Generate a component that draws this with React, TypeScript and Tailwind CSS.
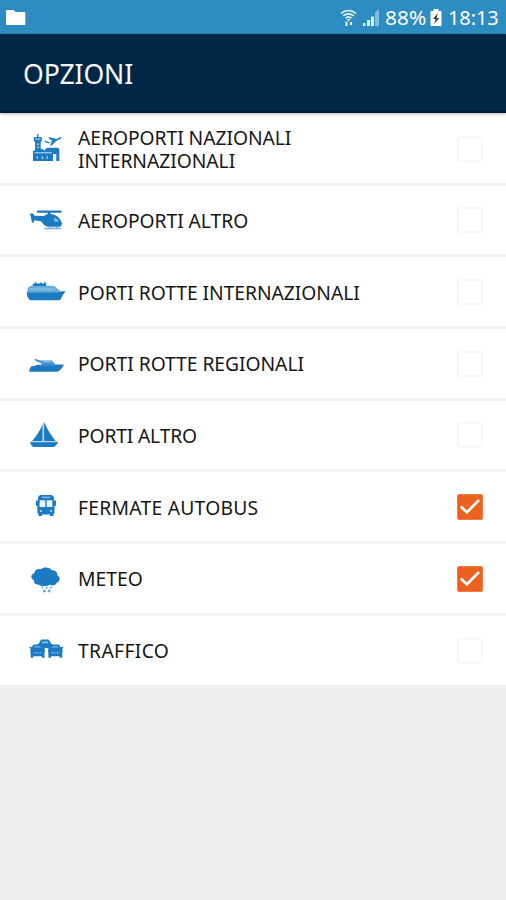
import type { ReactNode } from "react";

const BLUE = "#1b7ac2";

function Icon({ children }: { children: ReactNode }) {
  return (
    <svg className="ml-6 h-10 w-11 shrink-0" viewBox="0 0 44 40" fill={BLUE} aria-hidden="true">
      {children}
    </svg>
  );
}

const airport = (
  <Icon>
    <path d="M13.2 5h1.4v3h2.6l1 1.5-.8 3.2h-.7v7.3h2.6v1.2h2v-1.2l2-1.2h9.7c1.6 0 2.3.9 2.3 2.2V32h-3v-7H29v7H9V21.5h2v-8.8h-.6l-.9-3.2 1.2-1.5h2.5z" />
    <path d="M20 12.3l1.6-.7 3.6 1.9 3.4-1.5-4.6-3 1.7-.8 6.8 1.7 3-1.4c1.6-.6 2.6-.1 1.6 1l-5 2.5-4.2 4.3-2 .7 1.9-4-3.4 1.5z" />
    <path d="M11.3 10h5.2M12.6 15.2h2.6m-2.6 3h2.6M10.5 23.8H28M13.3 27v3m5-3v3m5-3v3" stroke="#c6e1f4" strokeWidth="1" fill="none" />
  </Icon>
);

const helicopter = (
  <Icon>
    <path d="M13 10.6h24.4v2.2H26.5v1.2c5.1.2 8.9 3.3 11.2 8.4.8 2.3-.7 4.4-3 4.4H25c-3.7 0-6.2-2.8-7.8-5.6L10 20.2v2.4H8L6 13.6h2.8l1.9 2.2 9.3.3 4-2.5v-.8H13z" />
    <path d="M29.8 17.4c2.2.7 3.8 2 5 4h-4.3z" fill="#8fc3e8" />
    <path d="M20.5 28.5H36.7m-10.7-2v2m7-2v2" stroke="#70b0dd" strokeWidth="1.4" fill="none" />
  </Icon>
);

const cruise = (
  <Icon>
    <path d="M2.7 19.8l38.9-.6c-2.7 3.2-3.4 5.2-4.8 7.8-.4.7-1 1.2-2 1.2H7c-2.5 0-4.3-4-4.3-8.4z" />
    <path d="M4 15.4l3-1.7h23l3.2 2.8 3.5 2.7-3 1.2H3z" fill="#69acdc" />
    <path d="M8.5 14l.7-2.6h2V9.5l2 1.9h3V10l2 1.4h2V9.3l2 2V14z" />
    <path d="M6 17h25" stroke="#a2cee9" strokeWidth="1" strokeDasharray="1.8 .7" />
  </Icon>
);

const yacht = (
  <Icon>
    <path d="M5 27.8l1.6-5.1 7.4-1.9h5.6l20.3-.3c-1.6 3.4-3.6 5.9-6.4 7.3z" />
    <path d="M10.3 14.4l6.2 2h11.2l4.6 5.1-16.5.5 2-2.7-5.8-2z" fill="#3d91cf" />
    <path d="M18.5 17.9h8l2 1.8" stroke="#a5cde8" fill="none" />
  </Icon>
);

const sailboat = (
  <Icon>
    <path d="M18.6 9.2V26H8.1c4.2-4.9 7.9-10.2 10.5-16.8zM20.1 6.7c2.7 7 7 13.6 11.8 19.6L20.1 26zM6 27.1h28.2c-1.2 2.7-2.8 4.2-4.7 5H9.2C7.5 30.9 6.5 29.3 6 27.1z" />
    <path d="M19.4 8v18.5M7.6 26.8h25.3" stroke="#9bcbe9" strokeWidth=".9" />
  </Icon>
);

const bus = (
  <Icon>
    <path d="M12.8 13.5h1.2v-2.2c0-2 1.2-3.3 3.2-3.3h9.6c2 0 3.2 1.3 3.2 3.3v2.2h1.2c.7 0 .9.5.9 1.2v4h-1.6V26l-1 1v2H26v-1.5h-8V29h-3.5v-2l-1.1-1v-7.3H12v-4c0-.7.1-1.2.8-1.2z" />
    <path d="M15.7 13.2h5.6v6.9h-5.8zm7 0h5.6l.2 6.9h-5.8z" fill="#e5f3fc" />
    <path d="M18 10.4h8" stroke="#80bce3" strokeWidth="1.5" />
    <circle cx="16.9" cy="24" r="1.1" fill="#b8dcf4" />
    <circle cx="27.1" cy="24" r="1.1" fill="#b8dcf4" />
  </Icon>
);

const cloud = (
  <Icon>
    <path d="M14.2 25.5c-3.2.2-4.7-1.9-4.1-4.3-4.1-1.7-3.4-6.3.2-7 .3-3.3 3.6-4.8 6.5-3.9 2.7-2.9 8.9-2.4 10.9.9 3.6-.4 5.9 2.1 5.6 5 3.4 2 3.1 6.1-.4 7.3-1 2.6-4.2 3.7-7 2.3-3.4 1.8-8.7 1.7-11.7-.3z" />
    <g fill="#64add9">
      <circle cx="18.4" cy="28.5" r="1" /><circle cx="22.6" cy="28.8" r="1" /><circle cx="27" cy="28.5" r="1" />
      <circle cx="20.4" cy="32" r="1.4" /><circle cx="25.2" cy="32" r="1.4" />
    </g>
  </Icon>
);

const traffic = (
  <Icon>
    <path d="M14.5 13l1.7-3.1c.5-.9 1.1-1.3 2.1-1.3h5.2c1 0 1.6.4 2.1 1.3l1.9 3.1h1v2.2L24 17h-5l-5-2v-2z" />
    <path d="M17.5 12.2l1-1.8h5l1 1.8z" fill="#87bfe4" />
    {[5.2, 22.9].map((x) => (
      <g key={x} transform={`translate(${x} 13.5)`}>
        <path d="M0 2.2l2.7.6 1-2C4.2.1 5 0 6 0h4.5c1 0 1.7.1 2.2.8l1 2 2.8-.6-.3 1.6-1.1.4c.8 1 .9 2.6.2 4.2v4.9h-2.6v-1.6H4v1.6H1.5V8.4c-.6-1.6-.5-3.2.3-4.2L.3 3.8z" />
        <path d="M4.7 3.2l1-1.6h5.1l1 1.6z" fill="#5fa6d8" />
        <path d="M4 7.6l2 .8h4.6l2-.8" stroke="#75b5df" fill="none" />
      </g>
    ))}
  </Icon>
);

const options = [
  { label: "AEROPORTI NAZIONALI INTERNAZIONALI", icon: airport, checked: false, tracking: "tracking-[-0.05px]" },
  { label: "AEROPORTI ALTRO", icon: helicopter, checked: false, tracking: "tracking-[-0.05px]" },
  { label: "PORTI ROTTE INTERNAZIONALI", icon: cruise, checked: false, tracking: "tracking-[-0.04px]" },
  { label: "PORTI ROTTE REGIONALI", icon: yacht, checked: false, tracking: "tracking-[-0.05px]" },
  { label: "PORTI ALTRO", icon: sailboat, checked: false, tracking: "tracking-[-0.17px]" },
  { label: "FERMATE AUTOBUS", icon: bus, checked: true, tracking: "tracking-[0.25px]" },
  { label: "METEO", icon: cloud, checked: true, tracking: "tracking-normal" },
  { label: "TRAFFICO", icon: traffic, checked: false, tracking: "tracking-[0.35px]" },
];

function Checkbox({ checked }: { checked: boolean }) {
  return checked ? (
    <span role="checkbox" aria-checked="true" className="mr-[23px] flex size-[26px] shrink-0 items-center justify-center rounded-[2px] border border-[#f47a45] bg-[#ed611f]">
      <svg className="size-6" viewBox="0 0 24 24" fill="none" stroke="white" strokeWidth="2.7">
        <path d="M2.8 11.5l6.1 5.8L21 5" />
      </svg>
    </span>
  ) : (
    <span role="checkbox" aria-checked="false" className="mr-[23px] size-[26px] shrink-0 rounded-[3px] border-2 border-[#f7f7f7]" />
  );
}

export default function App() {
  return (
    <div className="h-[900px] w-[506px] overflow-hidden bg-[#eeeeee] font-['Noto_Sans','Open_Sans',sans-serif]">
      <div className="flex h-[34px] items-center bg-[#2d8cc0] pt-px text-white">
        <svg className="ml-[5px] h-[18px] w-[22px]" viewBox="0 0 22 18" fill="white">
          <path d="M1 2.5C1 1.5 1.4 1 2.3 1h6.2l2 2H19c.9 0 1.3.5 1.3 1.3V15c0 .7-.4 1-1.3 1H2.3C1.4 16 1 15.7 1 15z" />
        </svg>
        <svg className="ml-auto h-[18px] w-[17px]" viewBox="0 0 17 18" fill="none" stroke="#e5f5fd" strokeWidth="1.6">
          <path d="M1 4.5c4.5-4 10.5-4 15 0M3.2 7c3-2.8 7.6-2.8 10.6 0M5.5 9.2c1.8-1.6 4.2-1.6 6 0" />
          <path d="M6.5 10h4l-2 2.5z" fill="#e5f5fd" stroke="none" />
          <path d="M6.5 12.5V17m4.5-4v3" strokeWidth="2" />
        </svg>
        <svg className="ml-[5px] h-[18px] w-[18px]" viewBox="0 0 18 18">
          <path d="M1 14h2.5v3H1zM5 11h3v6H5zM9 7.5h3V17H9z" fill="#d9eef9" />
          <path d="M13 3.5L17 0v17h-4z" fill="#81bddd" />
        </svg>
        <span className="ml-[5px] w-[43px] text-[20px] leading-[34px]">
          <span className="inline-block origin-left scale-x-[1.04] tracking-[0.1px]">88%</span>
        </span>
        <svg className="ml-[2px] h-[19px] w-3" viewBox="0 0 12 19">
          <path d="M3.5 1h5v2h2c.7 0 1 .3 1 1v13c0 .7-.3 1-1 1h-9c-.7 0-1-.3-1-1V4c0-.7.3-1 1-1h2z" fill="white" />
          <path d="M8 5l-5 6h2.6L4 16l5.2-6H6.5z" fill="#273f4b" />
        </svg>
        <span className="ml-[6px] mr-[7px] w-[51px] text-[20px] leading-[34px] tracking-[-0.1px]">18:13</span>
      </div>
      <header className="relative z-10 flex h-[79px] items-center border-b-2 border-[#001b34] bg-[#002746] pl-[23px] pt-[5px] text-[26.6px] tracking-[-0.1px] text-[#f7f8fa] shadow-[0_1px_3px_rgba(0,0,0,0.3)]">
        <h1>OPZIONI</h1>
      </header>
      <main className="bg-white">
        {options.map(({ label, icon, checked, tracking }, index) => (
          <div
            key={label}
            className={
              index === 7
                ? "flex h-[69px] items-center bg-white pt-px"
                : index === 0
                  ? "flex h-[72.5px] items-center border-b-[3px] border-[#f4f4f4] bg-white pt-[2px]"
                  : "flex h-[71.7px] items-center border-b-[3px] border-[#f4f4f4] bg-white pt-px"
            }
          >
            {icon}
            <span className={`ml-2.5 w-[300px] text-[19.3px] leading-[23px] text-[#161616] ${tracking}`}>{label}</span>
            <div className="ml-auto flex"><Checkbox checked={checked} /></div>
          </div>
        ))}
      </main>
    </div>
  );
}
